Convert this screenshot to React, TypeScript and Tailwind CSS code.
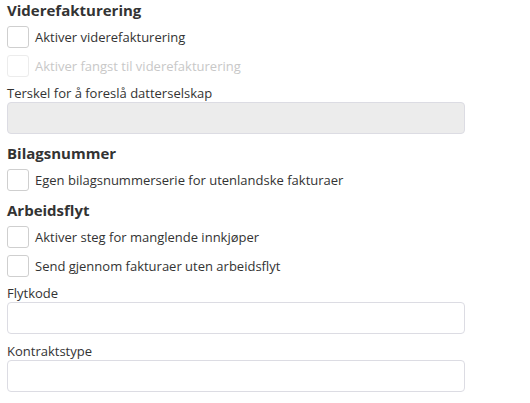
// Innstillinger — videre­fakturering, bilagsnummer og arbeidsflyt.
import { useState } from "react";

function Check({
  label,
  disabled,
  className = "",
}: {
  label: string;
  disabled?: boolean;
  className?: string;
}) {
  const [on, setOn] = useState(false);
  return (
    <label
      className={`flex h-[22px] items-center gap-[6px] text-[13px] leading-[18px] ${
        disabled ? "text-[#c8c8c8]" : "cursor-pointer text-[#333]"
      } ${className}`}
    >
      <input
        type="checkbox"
        className="sr-only"
        checked={on}
        disabled={disabled}
        onChange={(e) => setOn(e.target.checked)}
      />
      <span
        className={`flex h-[22px] w-[22px] shrink-0 items-center justify-center rounded-[3px] border bg-white ${
          disabled ? "border-[#ececec]" : "border-[#cfcfcf]"
        }`}
      >
        {on && <span className="text-[13px] leading-none text-[#333]">✓</span>}
      </span>
      {label}
    </label>
  );
}

function Field({
  label,
  disabled,
  className = "",
}: {
  label: string;
  disabled?: boolean;
  className?: string;
}) {
  return (
    <div className={className}>
      <div className="text-[13px] leading-[18px] text-[#333]">{label}</div>
      <input
        disabled={disabled}
        className={`block h-[32px] w-[458px] rounded-[4px] border border-[#dcdce3] px-2 text-[13px] outline-none ${
          disabled ? "bg-[#ececec]" : "bg-white"
        }`}
      />
    </div>
  );
}

function Heading({ children, className = "" }: { children: string; className?: string }) {
  return (
    <h3 className={`text-[15px] font-bold leading-[20px] text-[#333] ${className}`}>{children}</h3>
  );
}

export default function App() {
  return (
    <div
      className="min-h-[403px] w-[530px] bg-white px-[7px]"
      style={{ fontFamily: '"Open Sans", "Liberation Sans", sans-serif' }}
    >
      <Heading>Viderefakturering</Heading>
      <Check className="mt-[6px]" label="Aktiver viderefakturering" />
      <Check className="mt-[7px]" label="Aktiver fangst til viderefakturering" disabled />
      <Field className="mt-[7px]" label="Terskel for å foreslå datterselskap" disabled />

      <Heading className="mt-[9px]">Bilagsnummer</Heading>
      <Check className="mt-[6px]" label="Egen bilagsnummerserie for utenlandske fakturaer" />

      <Heading className="mt-[9px]">Arbeidsflyt</Heading>
      <Check className="mt-[6px]" label="Aktiver steg for manglende innkjøper" />
      <Check className="mt-[7px]" label="Send gjennom fakturaer uten arbeidsflyt" />
      <Field className="mt-[7px]" label="Flytkode" />
      <Field className="mt-[8px]" label="Kontraktstype" />
    </div>
  );
}
